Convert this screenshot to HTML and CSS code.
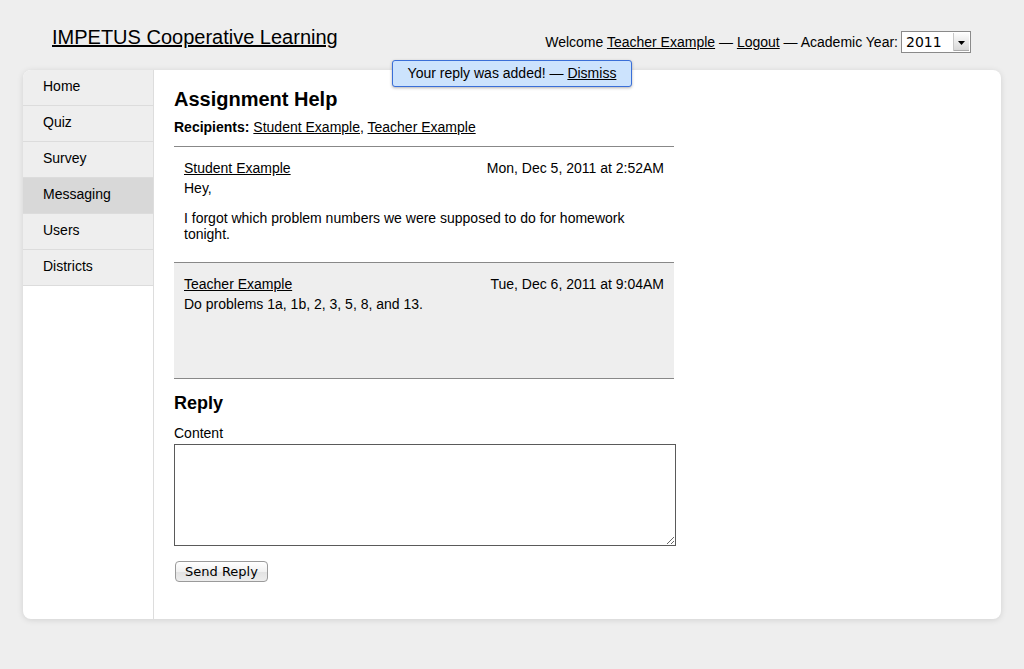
FILE: index.html
```html
<!DOCTYPE html>
<html>
<head>
<meta charset="utf-8">
<title>IMPETUS Cooperative Learning</title>
<link rel="stylesheet" href="styles.css">
</head>
<body>
<div class="header">
  <a class="site-title" href="#">IMPETUS Cooperative Learning</a>
  <div class="user-bar">
    <span>Welcome <a href="#">Teacher Example</a> — <a href="#">Logout</a> — Academic Year:</span>
    <div class="select">
      <span class="select-value">2011</span>
      <span class="select-arrow"><svg width="7" height="4" viewBox="0 0 7 4"><path d="M0 0H7L3.5 4Z" fill="#000"/></svg></span>
    </div>
  </div>
</div>

<div class="notice">Your reply was added! — <a href="#">Dismiss</a></div>

<div class="card">
  <ul class="nav">
    <li><a href="#">Home</a></li>
    <li><a href="#">Quiz</a></li>
    <li><a href="#">Survey</a></li>
    <li class="active"><a href="#">Messaging</a></li>
    <li><a href="#">Users</a></li>
    <li><a href="#">Districts</a></li>
  </ul>
  <div class="content">
    <h1 class="page-title">Assignment Help</h1>
    <div class="recipients"><b>Recipients:</b> <a href="#">Student Example</a>, <a href="#">Teacher Example</a></div>
    <div class="messages">
      <div class="message">
        <div class="message-head"><a href="#">Student Example</a><span>Mon, Dec 5, 2011 at 2:52AM</span></div>
        <div class="message-body">
          <p>Hey,</p>
          <p>I forgot which problem numbers we were supposed to do for homework tonight.</p>
        </div>
      </div>
      <div class="message alt">
        <div class="message-head"><a href="#">Teacher Example</a><span>Tue, Dec 6, 2011 at 9:04AM</span></div>
        <div class="message-body">
          <p>Do problems 1a, 1b, 2, 3, 5, 8, and 13.</p>
        </div>
      </div>
    </div>
    <h2 class="reply-title">Reply</h2>
    <label class="field-label" for="content">Content</label>
    <textarea id="content" class="reply-box"></textarea>
    <div class="actions"><button class="btn">Send Reply</button></div>
  </div>
</div>
</body>
</html>
```
FILE: styles.css
```css
html, body {
  margin: 0;
  padding: 0;
}
body {
  background: #eeeeee;
  font-family: "Liberation Sans", Arial, sans-serif;
  font-size: 14px;
  line-height: 16px;
  color: #000;
  position: relative;
  min-height: 669px;
}
a {
  color: #000;
  text-decoration: underline;
}
.header {
  display: flex;
  justify-content: space-between;
  align-items: flex-start;
  height: 70px;
  padding: 0 53px 0 52px;
}
.site-title {
  font-size: 20px;
  line-height: 23px;
  margin-top: 26px;
}
.user-bar {
  display: flex;
  align-items: center;
  margin-top: 31px;
}
.select {
  margin-left: 3px;
  width: 68px;
  height: 20px;
  border: 1px solid #8a8a8a;
  background: #fff;
  display: flex;
  justify-content: space-between;
  align-items: stretch;
}
.select-value {
  font-family: "DejaVu Sans", sans-serif;
  font-size: 14px;
  line-height: 20px;
  padding-left: 4px;
}
.select-arrow {
  width: 15px;
  margin: 1px;
  border-left: 1px solid #c8c8c8;
  background: linear-gradient(#fdfdfd, #d6d6d6);
  display: flex;
  align-items: center;
  justify-content: center;
  box-shadow: inset 0 -1px 0 #aaa;
}
.select-arrow svg { display: block; margin-top: 1px; }

.notice {
  position: absolute;
  top: 60px;
  left: 392px;
  width: 238px;
  height: 25px;
  line-height: 25px;
  text-align: center;
  background: #cce3fd;
  border: 1px solid #3a6fd8;
  border-radius: 3px;
  box-shadow: 0 1px 3px rgba(0,0,0,0.3);
  z-index: 2;
}

.card {
  margin: 0 23px;
  background: #fff;
  border-radius: 8px;
  box-shadow: 0 1px 6px rgba(0,0,0,0.12);
  display: flex;
  overflow: hidden;
}
.nav {
  list-style: none;
  margin: 0;
  padding: 0;
  width: 130px;
  border-right: 1px solid #dddddd;
  flex: none;
}
.nav li {
  background: #eeeeee;
  border-bottom: 1px solid #dcdcdc;
  height: 35px;
}
.nav li a {
  display: block;
  padding: 8px 20px 11px;
  text-decoration: none;
  line-height: 16px;
}
.nav li.active {
  background: #d8d8d8;
}
.content {
  padding: 18px 20px 37px;
  flex: 1;
}
.page-title {
  margin: 0;
  font-size: 20px;
  line-height: 23px;
  font-weight: bold;
}
.recipients {
  margin-top: 8px;
}
.messages {
  width: 500px;
  margin-top: 11px;
  border-top: 1px solid #888;
}
.message {
  padding: 13px 10px 10px;
  min-height: 92px;
  border-bottom: 1px solid #888;
}
.message.alt {
  background: #eeeeee;
}
.message-head {
  display: flex;
  justify-content: space-between;
  margin-bottom: 4px;
}
.message-body p {
  margin: 14px 0 0;
}
.message-body p:first-child {
  margin-top: 0;
}
.reply-title {
  margin: 14px 0 0;
  font-size: 18px;
  line-height: 21px;
  font-weight: bold;
}
.field-label {
  display: block;
  margin-top: 11px;
}
.reply-box {
  display: block;
  margin: 3px 0 0;
  width: 502px;
  height: 102px;
  box-sizing: border-box;
  border: 1px solid #5a5a5a;
  padding: 2px;
  font-family: "Liberation Sans", sans-serif;
  font-size: 14px;
}
.actions {
  margin-top: 15px;
}
.btn {
  margin: 0 0 0 1px;
  width: 93px;
  height: 21px;
  padding: 0;
  font-family: "DejaVu Sans", sans-serif;
  font-size: 13px;
  line-height: 18px;
  color: #000;
  border: 1px solid #9a9a9a;
  border-radius: 4px;
  background: linear-gradient(#ffffff, #f1f1f1 50%, #e2e2e2 51%, #ededed);
}
```
